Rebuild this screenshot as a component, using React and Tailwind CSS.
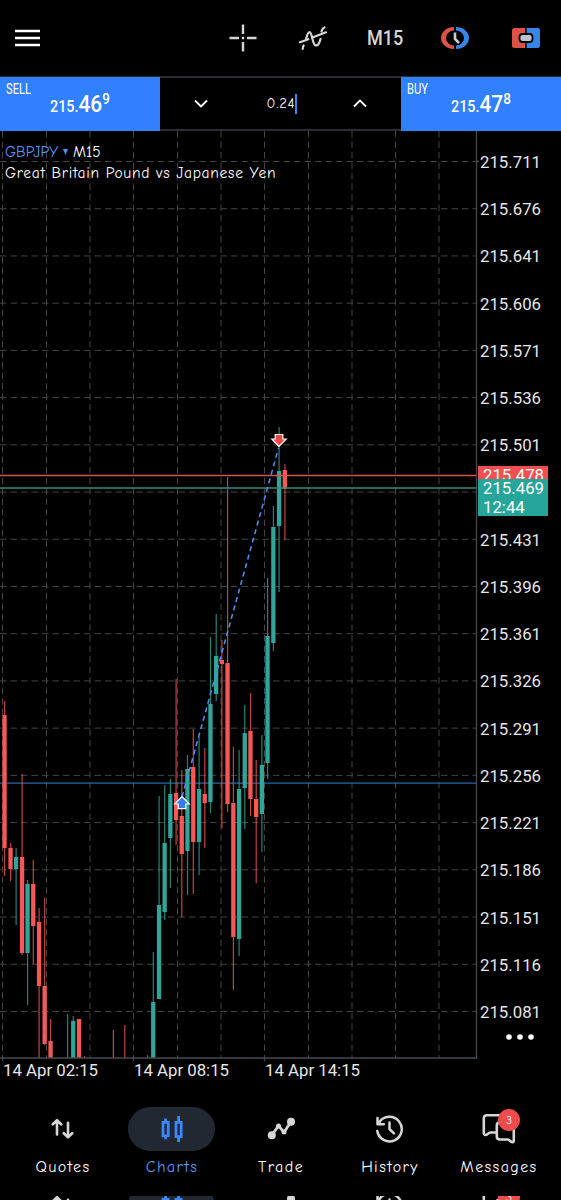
import React from 'react';

// x, high, body top, body bottom, low, up
const candles = [
  [4.5, 701, 715, 848, 876, 0],
  [10.5, 843, 848, 869, 881, 0],
  [16, 848, 857, 869, 925, 1],
  [22, 774, 857, 953, 955, 0],
  [27.5, 880, 884, 953, 1005, 1],
  [33.2, 860, 884, 926, 964, 0],
  [39, 908, 922, 986, 1058, 0],
  [44.6, 898, 986, 1044, 1045, 0],
  [50.5, 1019, 1041, 1058, 1058, 0],
  [67.5, 1014, 1058, 1058, 1058, 1],
  [73.2, 1016, 1021, 1058, 1058, 1],
  [79, 1019, 1019, 1058, 1058, 0],
  [84.5, 1056, 1058, 1058, 1058, 0],
  [113.3, 1030, 1058, 1058, 1058, 0],
  [124.7, 1025, 1058, 1058, 1058, 0],
  [147.5, 1055, 1058, 1058, 1058, 1],
  [153.2, 952, 1002, 1058, 1058, 1],
  [159, 796, 905, 999, 999, 1],
  [164.6, 785, 843, 912, 920, 1],
  [170.3, 779, 794, 838, 888, 1],
  [176, 679, 793, 820, 845, 0],
  [181.7, 770, 816, 854, 917, 0],
  [187.4, 755, 769, 851, 895, 1],
  [193.2, 729, 767, 842, 894, 0],
  [199, 737, 789, 842, 875, 1],
  [204.7, 748, 794, 803, 848, 0],
  [210.4, 637, 704, 802, 813, 1],
  [216.1, 614, 656, 694, 701, 1],
  [221.8, 640, 660, 664, 828, 0],
  [227.5, 477, 663, 804, 812, 0],
  [233.3, 747, 803, 937, 990, 0],
  [239, 750, 789, 939, 956, 1],
  [244.7, 705, 733, 788, 829, 1],
  [250.4, 693, 731, 799, 816, 0],
  [256.1, 760, 799, 817, 883, 0],
  [261.8, 735, 765, 814, 852, 1],
  [267.5, 578, 636, 763, 779, 1],
  [273.3, 506, 527, 643, 651, 1],
  [279, 427, 471, 526, 592, 1],
  [284.8, 464, 470, 489, 540, 0],
];

const prices = ['215.711', '215.676', '215.641', '215.606', '215.571', '215.536', '215.501', '215.466', '215.431', '215.396', '215.361', '215.326', '215.291', '215.256', '215.221', '215.186', '215.151', '215.116', '215.081'];
const gridX = [2.5, 46.5, 90, 133.5, 177.5, 221, 264.5, 308.5, 352, 395.5, 439];

const hand = "font-['Comic_Neue','Comic_Sans_MS',cursive]";

const QuotesIcon = () => (
  <svg width="24" height="24" viewBox="0 0 24 24" fill="none" stroke="currentColor" strokeWidth="2.6" strokeLinecap="round" strokeLinejoin="round">
    <path d="M6 17.5V3.5M1.8 7.3 6 3.2l4.2 4.1M17 5.8V20M12.8 16.2l4.2 4.1 4.2-4.1" />
  </svg>
);

const ChartsIcon = () => (
  <svg width="24" height="28" viewBox="0 0 24 28" fill="none" stroke="currentColor" strokeWidth="2.8">
    <path d="M3 7.4h5.2v13.4H3zM5.600 3.5v3M5.600 21v3.300M16 7.400h5.200v14.200H16zM18.600 1v5.700M18.600 22v5" />
  </svg>
);

const TradeIcon = () => (
  <svg width="30" height="26" viewBox="0 0 30 26" fill="none" stroke="currentColor" strokeWidth="2.8" strokeLinejoin="round">
    <path d="m5.8 19.300 6.700-9.600 5.500 6.600 7-10.600" />
    <circle cx="5.800" cy="19.300" r="4" fill="currentColor" stroke="none" />
    <circle cx="12.500" cy="9.900" r="2.500" fill="currentColor" stroke="none" />
    <circle cx="18" cy="16.100" r="2.500" fill="currentColor" stroke="none" />
    <circle cx="25" cy="5.700" r="4" fill="currentColor" stroke="none" />
  </svg>
);

const HistoryIcon = () => (
  <svg width="30" height="30" viewBox="0 0 30 30" fill="none" stroke="currentColor" strokeWidth="2.5" strokeLinecap="round" strokeLinejoin="round">
    <path d="M2.300 17A12.300 12.300 0 1 0 4.300 8.200M2.500 4v6.200h6.300M4.500 8v2M14.500 8.500V15l4.400 4.400" />
  </svg>
);

const MessagesIcon = () => (
  <svg width="34" height="32" viewBox="0 0 34 32" fill="none" stroke="currentColor" strokeWidth="2.600" strokeLinecap="round" strokeLinejoin="round">
    <path d="M14.500 19.500H8.500q-1.500 0-2.700 1.300-1.300 1.300-2.800 1.200-1.200-.2-1.200-2V5.500Q1.800 2.200 5 2.200H22q3 0 3 3V9M17.800 9.500h11q3 0 3 3v14.500q0 2-1.300 2.200-1.500 0-2.500-1.300-1-1.400-2.500-1.400h-7.500q-3.200 0-3.200-3V12.500q0-3 3-3z" />
  </svg>
);

const tabs = [
  { name: 'Quotes', icon: QuotesIcon },
  { name: 'Charts', icon: ChartsIcon, active: true },
  { name: 'Trade', icon: TradeIcon },
  { name: 'History', icon: HistoryIcon },
  { name: 'Messages', icon: MessagesIcon, badge: 3 },
];

const NavIcon = ({ tab }) => {
  const Icon = tab.icon;
  return (
    <div className={`relative flex h-11 w-[87px] shrink-0 items-center justify-center rounded-[22px] ${tab.active ? 'bg-[#212832] text-[#3b87fb]' : 'text-[#d6d6d6]'}`}>
      <Icon />
      {tab.badge && (
        <span className={`absolute left-[43px] top-[2px] flex h-[22px] w-[22px] items-center justify-center rounded-full bg-[#ee4b4b] text-[12px] text-white ${hand}`}>
          {tab.badge}
        </span>
      )}
    </div>
  );
};

const Toolbar = () => (
  <header className="flex h-[76px] shrink-0 items-center pl-[15px] text-[#d6d6d6]">
    <svg width="25" height="18" viewBox="0 0 25 18" fill="none" stroke="white" strokeWidth="2.7">
      <path d="M0 2h25M0 9h25M0 16h25" />
    </svg>
    <svg className="ml-[189px]" width="28" height="28" viewBox="0 0 28 28" fill="none" stroke="currentColor" strokeWidth="2.4">
      <path d="M14 .5v9.5M14 18v9.5M.5 14H10M18 14h9.5M12.8 14h2.4" />
    </svg>
    <svg className="ml-[42px]" width="30" height="26" viewBox="0 0 30 26" fill="none" stroke="currentColor" strokeWidth="2.2" strokeLinecap="round">
      <path d="M1 17.200 9.300 14.200M14 12.300 27 7.300M3.700 24q.2-2 .9-3.500M7 14.500C8 10 9 7.200 10.700 7.200 13.200 7.200 13.300 20.500 17 20.500 19.500 20.500 20.700 17.500 21.500 14M22.500 6.500C23 4.500 24 3 25.500 2.500" />
    </svg>
    <span className="ml-[38px] w-[37px] text-[20px] font-medium leading-6 font-['Roboto',sans-serif]">
      <span className="inline-block origin-left scale-x-[0.9]">M15</span>
    </span>
    <svg className="ml-[37px]" width="28" height="24" viewBox="0 0 28 24" fill="none">
      <path d="M13 1A13 11 0 0 0 13 23V19.500A8 7.500 0 0 1 13 4.500Z" fill="#dd5248" />
      <path d="M15 1A13 11 0 0 1 15 23V19.500A8 7.500 0 0 0 15 4.500Z" fill="#3586e7" />
      <path d="M14 6.500V13l4 4" stroke="#c5ced2" strokeWidth="2.600" />
    </svg>
    <svg className="ml-[43px]" width="28" height="20" viewBox="0 0 28 20">
      <path d="M2.500 0H13.300V20H2.500Q0 20 0 17.500V2.500Q0 0 2.500 0Z" fill="#dd5248" />
      <path d="M14.700 0H25.500Q28 0 28 2.500V17.500Q28 20 25.500 20H14.700Z" fill="#3586e7" />
      <rect x="7.500" y="6" width="13" height="8" rx="3" fill="#b9c5cb" stroke="black" strokeWidth="1.800" />
    </svg>
  </header>
);

const Quote = ({ side, main, big, sup }) => (
  <div className="-my-px h-[54px] w-[160px] bg-[#3080ff] text-white font-['Roboto',sans-serif]">
    <div className="h-[15px] pl-[6px] pt-[4px] text-[14px] leading-[16px]">
      <span className="inline-block origin-left scale-x-[0.8]">{side}</span>
    </div>
    <div className="flex h-[26px] items-baseline pl-[50px] font-medium leading-[24px]">
      <span className="inline-flex origin-left scale-x-[0.87] items-baseline">
        <span className="text-[16.5px]">{main}</span>
        <span className="text-[24px]">{big}</span>
        <span className="relative -top-[8px] text-[15.5px]">{sup}</span>
      </span>
    </div>
  </div>
);

const OrderBar = () => (
  <section className="flex h-[55px] shrink-0 border-y-2 border-[#2c2d30]">
    <Quote side="SELL" main="215." big="46" sup="9" />
    <div className="flex w-[241px] items-center justify-between px-[34px] text-white">
      <svg width="14" height="9" viewBox="0 0 14 9" fill="none" stroke="currentColor" strokeWidth="1.800"><path d="m1 1.500 6 6 6-6" /></svg>
      <span className={`flex items-center pl-[3px] text-[14.5px] tracking-[0.8px] ${hand}`}>0.24<i className="h-5 w-[2px] bg-[#3b82f6]" /></span>
      <svg width="14" height="9" viewBox="0 0 14 9" fill="none" stroke="currentColor" strokeWidth="1.800"><path d="m1 7.500 6-6 6 6" /></svg>
    </div>
    <Quote side="BUY" main="215." big="47" sup="8" />
  </section>
);

const Plot = () => (
  <svg className="absolute left-0 top-0" width="480" height="932" viewBox="0 131 480 932" fill="none">
    <g stroke="#454545" strokeDasharray="6.500 4">
      {gridX.map((x) => <path key={x} d={`M${x} 131V1058`} />)}
      {prices.map((p, i) => <path key={p} d={`M0 ${161.5 + i * 47.22}H476`} />)}
    </g>
    <path d="M0 783.200H476" stroke="#2467aa" strokeWidth="1.300" />
    {candles.map(([x, high, top, bottom, low, up]) => (
      <g key={x} fill={up ? '#2fa699' : '#f45955'}>
        <rect x={x - 0.5} y={high} width="1.200" height={low - high} opacity=".78" />
        <rect x={x - 2.1} y={top} width="4.300" height={bottom - top} />
      </g>
    ))}
    <path d="M0 475.500H476" stroke="#d45450" strokeWidth="1.300" />
    <path d="M0 488H476" stroke="#39897b" strokeWidth="1.300" />
    <path d="M182 797 278.500 448" stroke="#5289ed" strokeWidth="1.600" strokeDasharray="5 3.800" />
    <path d="M182 796.500l7.200 7.500h-3.400v4.700h-7.600V804h-3.400z" fill="#347de9" stroke="white" strokeWidth="1.200" />
    <path d="M279 446.500l-7.200-7.500h3.400v-4.500h7.600v4.500h3.400z" fill="#ef4748" stroke="white" strokeWidth="1.200" />
    <path d="M476.500 131V1058H0M2.500 1058v3M133.500 1058v3M264.500 1058v3M476 161.500h3" stroke="#464b50" strokeWidth="1.300" />
  </svg>
);

const Chart = () => (
  <main className="relative flex h-[954px] shrink-0 font-['Roboto',sans-serif]">
    <Plot />
    <div className={`relative w-[477px] pl-[5px] pt-[11px] text-[15.5px] leading-[20.5px] text-white ${hand}`}>
      <div className="flex items-center gap-[5px]">
        <span className="w-[53px] text-[#569cff]">GBPJPY</span>
        <svg width="5" height="6" viewBox="0 0 5 6"><path d="M0 0h5L2.500 6z" fill="#4f94f5" /></svg>
        <span>M15</span>
      </div>
      <div className="whitespace-nowrap tracking-[0.7px]">Great Britain Pound vs Japanese Yen</div>
    </div>
    <div className="flex flex-col pl-[3px] pt-[7px] text-[16.8px] text-[#e6e6e6]">
      {prices.map((p) => (
        <span key={p} className="flex h-[47.22px] shrink-0 items-start pt-[12px] leading-[24px]">{p === '215.466' ? '' : p}</span>
      ))}
    </div>
    {/* ask and bid tags with candle countdown */}
    <div className="absolute left-[478px] top-[335px] w-[70px] text-[16.8px] text-white">
      <div className="h-[13px] overflow-hidden bg-[#f24f50] pl-[5px] leading-[18px]">215.478</div>
      <div className="h-[37px] bg-[#26a69a] pl-[5px] leading-[18.5px]">
        <div>215.469</div>
        <div>12:44</div>
      </div>
    </div>
    <svg className="absolute left-[505px] top-[902px]" width="30" height="8" fill="white">
      <circle cx="4" cy="4" r="2.800" /><circle cx="15" cy="4" r="2.800" /><circle cx="26" cy="4" r="2.800" />
    </svg>
    <div className="absolute left-[3px] top-[928px] flex text-[16.8px] leading-[22px] text-[#e6e6e6]">
      <span className="w-[131px]">14 Apr 02:15</span>
      <span className="w-[131px]">14 Apr 08:15</span>
      <span>14 Apr 14:15</span>
    </div>
  </main>
);

export default function App() {
  return (
    <div className="flex h-[1200px] w-[561px] flex-col overflow-hidden bg-black">
      <Toolbar />
      <OrderBar />
      <Chart />
      <nav className="flex h-[111px] shrink-0 px-2 pt-[22px]">
        {tabs.map((tab) => (
          <div key={tab.name} className="flex w-[109px] shrink-0 flex-col items-center">
            <NavIcon tab={tab} />
            <span className={`mt-[6px] pl-px text-[16px] leading-5 tracking-[1.4px] ${hand} ${tab.active ? 'text-[#579cff]' : 'text-white'}`}>{tab.name}</span>
          </div>
        ))}
      </nav>
      <div className="flex h-1 shrink-0 overflow-hidden px-2">
        {tabs.map((tab) => (
          <div key={tab.name} className="-mt-3 flex w-[109px] shrink-0 justify-center">
            <NavIcon tab={tab} />
          </div>
        ))}
      </div>
    </div>
  );
}
